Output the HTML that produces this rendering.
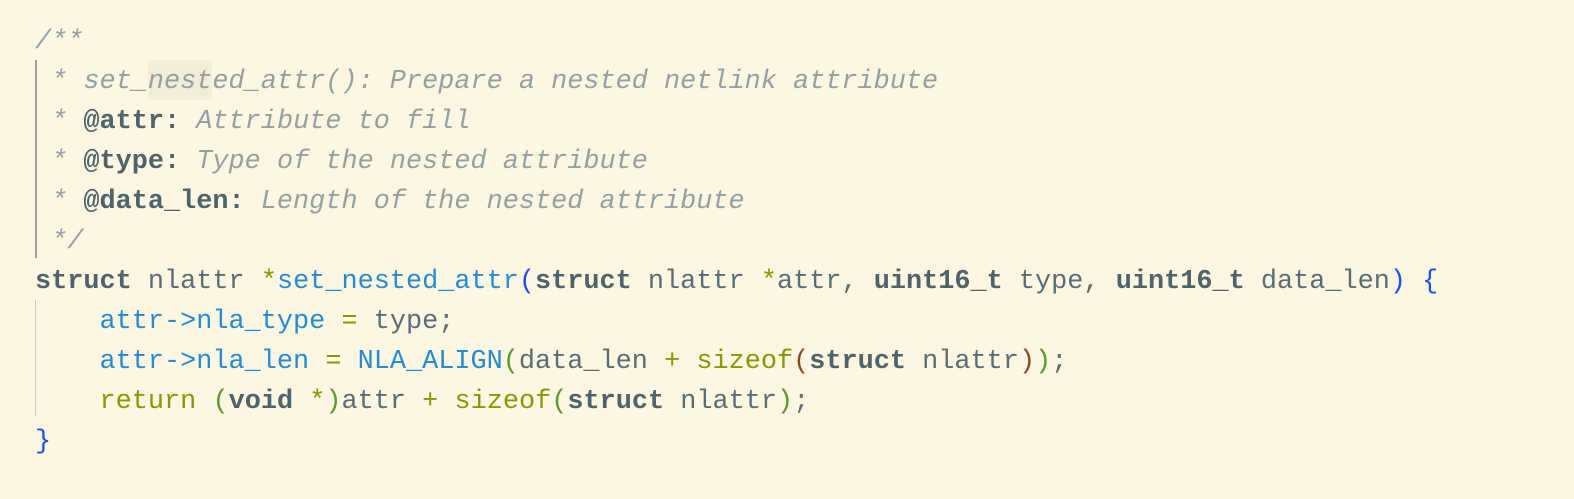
<!DOCTYPE html>
<html><head><style>
html,body{margin:0;padding:0;background:#fdf6e3;width:1574px;height:499px;overflow:hidden}
pre{margin:0;position:absolute;left:35px;top:22px;font-family:"Liberation Mono",monospace;font-size:26.88px;line-height:40px;color:#586e75}
.c{color:#93a1a1;font-style:italic}
.t{color:#4f636b;font-weight:bold;font-style:normal}
.k{color:#4f636b;font-weight:bold}
.b{color:#268bd2}
.g{color:#859900}
.p1{color:#1e4ff0}
.p2{color:#5c9a2c}
.p3{color:#8b4a1c}
.bar{position:absolute;background:#9aa0a0;width:2px}
.hl{position:absolute;background:#f3ecd8;border-radius:4px}
</style></head><body>
<div class="hl" style="left:148px;top:60px;width:64px;height:40px"></div>
<div class="bar" style="left:35px;top:60px;height:198px"></div>
<div class="bar" style="left:35px;top:300px;height:116px;width:1px;background:#c8c8c0"></div>
<pre><span class="c">/**
 * set_nested_attr(): Prepare a nested netlink attribute
 * <span class="t">@attr:</span> Attribute to fill
 * <span class="t">@type:</span> Type of the nested attribute
 * <span class="t">@data_len:</span> Length of the nested attribute
 */</span>
<span class="k">struct</span> nlattr <span class="g">*</span><span class="b">set_nested_attr</span><span class="p1">(</span><span class="k">struct</span> nlattr <span class="g">*</span>attr, <span class="k">uint16_t</span> type, <span class="k">uint16_t</span> data_len<span class="p1">)</span> <span class="p1">{</span>
    <span class="b">attr-&gt;nla_type</span> <span class="g">=</span> type;
    <span class="b">attr-&gt;nla_len</span> <span class="g">=</span> <span class="b">NLA_ALIGN</span><span class="p2">(</span>data_len <span class="g">+</span> <span class="g">sizeof</span><span class="p3">(</span><span class="k">struct</span> nlattr<span class="p3">)</span><span class="p2">)</span>;
    <span class="g">return</span> <span class="p2">(</span><span class="k">void</span> <span class="g">*</span><span class="p2">)</span>attr <span class="g">+</span> <span class="g">sizeof</span><span class="p2">(</span><span class="k">struct</span> nlattr<span class="p2">)</span>;
<span class="p1">}</span></pre>
</body></html>
